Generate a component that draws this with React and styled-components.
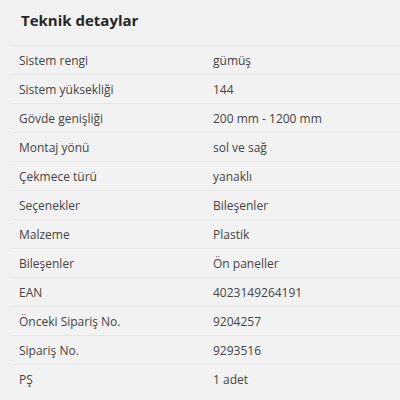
import React from "react";
import styled, { createGlobalStyle } from "styled-components";

const Global = createGlobalStyle`
  html, body { margin: 0; padding: 0; background: #f2f2f2; }
  body { font-family: "Open Sans", "Liberation Sans", sans-serif; }
`;

const Wrap = styled.div`
  width: 400px;
  height: 400px;
  overflow: hidden;
  background: #f2f2f2;
  padding-left: 13px;
  box-sizing: border-box;
`;

const Title = styled.h2`
  margin: 0;
  height: 45px;
  padding: 9px 0 0 8px;
  box-sizing: border-box;
  font-size: 15px;
  font-weight: 700;
  color: #262626;
  line-height: 22px;
`;

const Table = styled.div`
  display: flex;
  flex-direction: column;
`;

const Row = styled.div`
  display: grid;
  grid-template-columns: 194px 1fr;
  height: 29px;
  border-top: 1px solid #e4e4e4;
  box-sizing: border-box;
  align-items: center;
  font-size: 12px;
  color: #444;
  padding-left: 6px;
`;

const Cell = styled.span`
  white-space: nowrap;
`;

const rows = [
  ["Sistem rengi", "gümüş"],
  ["Sistem yüksekliği", "144"],
  ["Gövde genişliği", "200 mm - 1200 mm"],
  ["Montaj yönü", "sol ve sağ"],
  ["Çekmece türü", "yanaklı"],
  ["Seçenekler", "Bileşenler"],
  ["Malzeme", "Plastik"],
  ["Bileşenler", "Ön paneller"],
  ["EAN", "4023149264191"],
  ["Önceki Sipariş No.", "9204257"],
  ["Sipariş No.", "9293516"],
  ["PŞ", "1 adet"],
];

export default function App() {
  return (
    <Wrap>
      <Global />
      <Title>Teknik detaylar</Title>
      <Table>
        {rows.map(([k, v]) => (
          <Row key={k}>
            <Cell>{k}</Cell>
            <Cell>{v}</Cell>
          </Row>
        ))}
      </Table>
    </Wrap>
  );
}
